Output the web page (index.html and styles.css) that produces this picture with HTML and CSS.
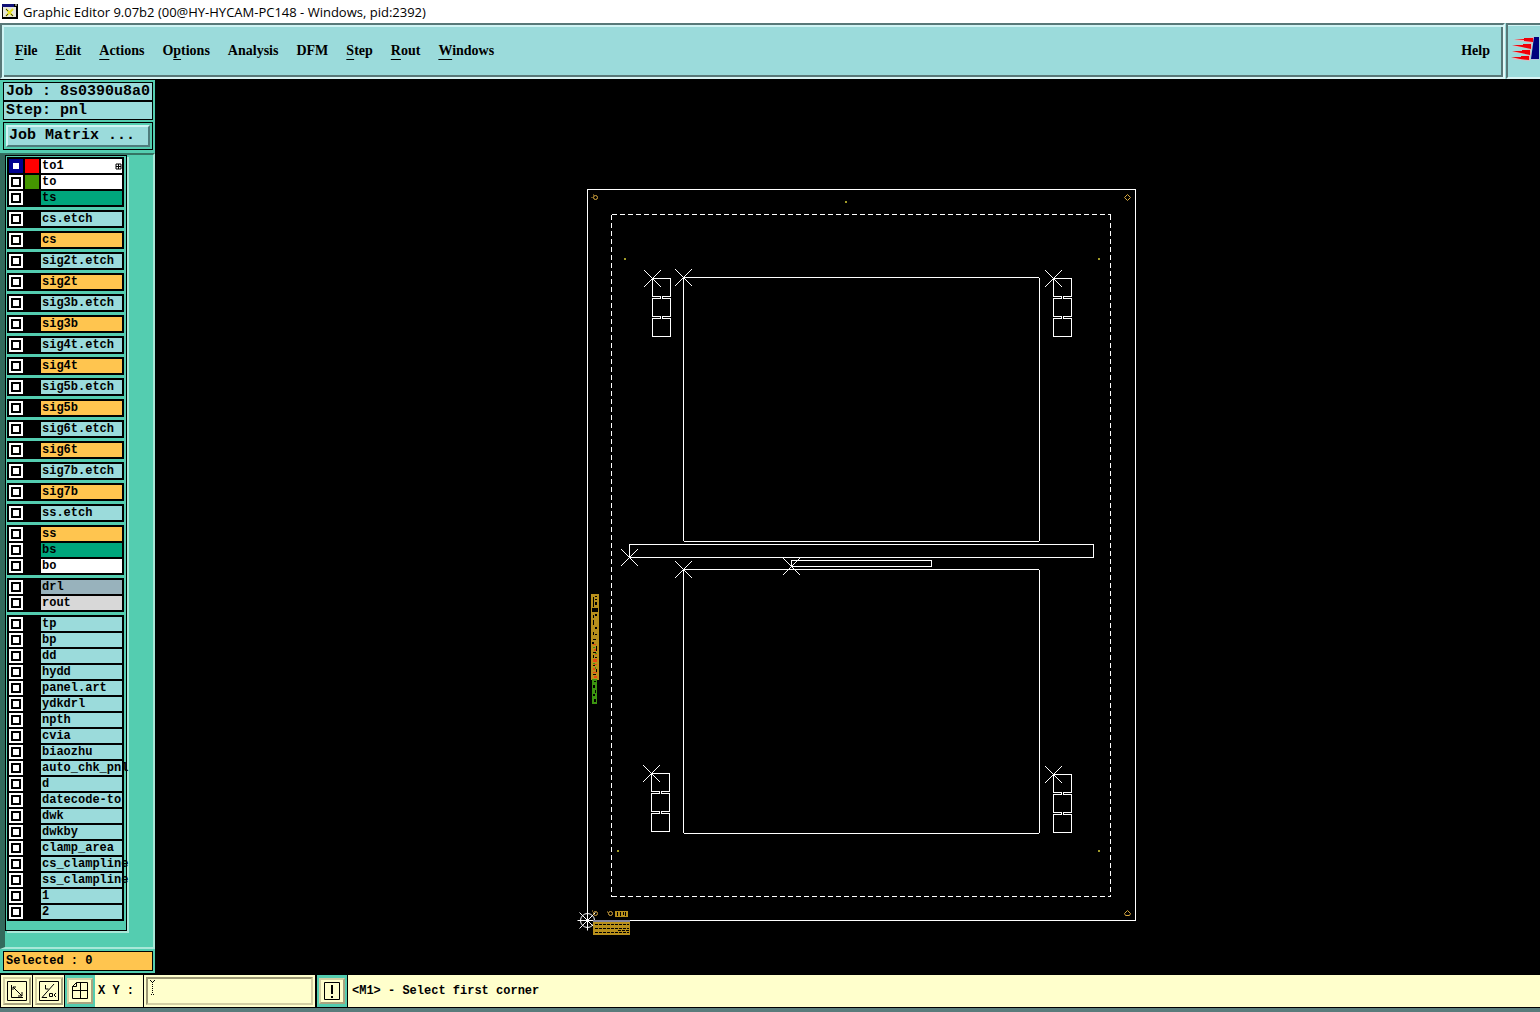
FILE: index.html
```html
<!DOCTYPE html>
<html lang="en">
<head>
<meta charset="utf-8">
<title>Graphic Editor 9.07b2</title>
<link rel="stylesheet" href="styles.css">
</head>
<body>
<header class="titlebar">
  <svg class="app-icon" viewBox="0 0 16 15" aria-hidden="true">
    <rect width="16" height="15" fill="#000"/><rect x="1" y="3" width="13" height="10" fill="#e4e4dc"/>
    <rect width="12" height="3" fill="#101078"/><path d="M13 1h2" stroke="#fff"/>
    <path d="M4 5l7 7M11 5l-7 7" stroke="#e6e020" stroke-width="2"/><path d="M4 5l2 2M9 10l2 2M4 12l2-2" stroke="#333"/>
  </svg>
  <span>Graphic Editor 9.07b2 (00@HY-HYCAM-PC148 - Windows, pid:2392)</span>
</header>

<div class="menurow">
  <nav class="menubar">
    <button class="menu"><u>F</u>ile</button>
    <button class="menu"><u>E</u>dit</button>
    <button class="menu"><u>A</u>ctions</button>
    <button class="menu">O<u>p</u>tions</button>
    <button class="menu">Analysis</button>
    <button class="menu">DFM</button>
    <button class="menu"><u>S</u>tep</button>
    <button class="menu"><u>R</u>out</button>
    <button class="menu"><u>W</u>indows</button>
    <button class="menu help">Help</button>
  </nav>
  <div class="brand">
    <svg class="logo" viewBox="0 0 31 52" aria-hidden="true">
      <g fill="#e8b8bc"><path d="M5 15l21-3v6zM4 21l20-3v6zM4 27l19-3v6zM3 34l19-4v6z"/></g>
      <g fill="#f00008"><path d="M6 14h10v-1h9v4l-9-1v-1zM4 20h11v-1h8v5l-9-2zM4 26h10v-1h8v5l-9-2zM3 32h10v-1h8v4l-9-1z"/></g>
      <path d="M27 12h4v23h-9z" fill="#b8c4d8"/><path d="M26 12h5v22h-8z" fill="#00007c"/>
    </svg>
  </div>
</div>

<main class="workspace">
  <aside class="sidebar">
    <div class="job">
      <div class="info">Job : 8s0390u8a0</div>
      <div class="info">Step: pnl</div>
    </div>
    <div class="matrix"><button class="matrix-btn">Job Matrix ...</button></div>
    <div class="scroll">
      <div class="layers">
        <div class="group">
          <label class="layer board"><input type="checkbox" checked><i class="swatch red"></i><span>to1</span><svg class="mark" viewBox="0 0 5 5" aria-hidden="true"><path d="M0 0h5v5H0zM2.500 0v5M0 2.500h5" fill="none" stroke="#000"/></svg></label>
          <label class="layer board"><input type="checkbox"><i class="swatch green"></i><span>to</span></label>
          <label class="layer mask"><input type="checkbox"><i class="swatch"></i><span>ts</span></label>
        </div>
        <div class="group"><label class="layer"><input type="checkbox"><i class="swatch"></i><span>cs.etch</span></label></div>
        <div class="group"><label class="layer signal"><input type="checkbox"><i class="swatch"></i><span>cs</span></label></div>
        <div class="group"><label class="layer"><input type="checkbox"><i class="swatch"></i><span>sig2t.etch</span></label></div>
        <div class="group"><label class="layer signal"><input type="checkbox"><i class="swatch"></i><span>sig2t</span></label></div>
        <div class="group"><label class="layer"><input type="checkbox"><i class="swatch"></i><span>sig3b.etch</span></label></div>
        <div class="group"><label class="layer signal"><input type="checkbox"><i class="swatch"></i><span>sig3b</span></label></div>
        <div class="group"><label class="layer"><input type="checkbox"><i class="swatch"></i><span>sig4t.etch</span></label></div>
        <div class="group"><label class="layer signal"><input type="checkbox"><i class="swatch"></i><span>sig4t</span></label></div>
        <div class="group"><label class="layer"><input type="checkbox"><i class="swatch"></i><span>sig5b.etch</span></label></div>
        <div class="group"><label class="layer signal"><input type="checkbox"><i class="swatch"></i><span>sig5b</span></label></div>
        <div class="group"><label class="layer"><input type="checkbox"><i class="swatch"></i><span>sig6t.etch</span></label></div>
        <div class="group"><label class="layer signal"><input type="checkbox"><i class="swatch"></i><span>sig6t</span></label></div>
        <div class="group"><label class="layer"><input type="checkbox"><i class="swatch"></i><span>sig7b.etch</span></label></div>
        <div class="group"><label class="layer signal"><input type="checkbox"><i class="swatch"></i><span>sig7b</span></label></div>
        <div class="group"><label class="layer"><input type="checkbox"><i class="swatch"></i><span>ss.etch</span></label></div>
        <div class="group">
          <label class="layer signal"><input type="checkbox"><i class="swatch"></i><span>ss</span></label>
          <label class="layer mask"><input type="checkbox"><i class="swatch"></i><span>bs</span></label>
          <label class="layer board"><input type="checkbox"><i class="swatch"></i><span>bo</span></label>
        </div>
        <div class="group">
          <label class="layer drill"><input type="checkbox"><i class="swatch"></i><span>drl</span></label>
          <label class="layer rout"><input type="checkbox"><i class="swatch"></i><span>rout</span></label>
        </div>
        <div class="group">
          <label class="layer"><input type="checkbox"><i class="swatch"></i><span>tp</span></label>
          <label class="layer"><input type="checkbox"><i class="swatch"></i><span>bp</span></label>
          <label class="layer"><input type="checkbox"><i class="swatch"></i><span>dd</span></label>
          <label class="layer"><input type="checkbox"><i class="swatch"></i><span>hydd</span></label>
          <label class="layer"><input type="checkbox"><i class="swatch"></i><span>panel.art</span></label>
          <label class="layer"><input type="checkbox"><i class="swatch"></i><span>ydkdrl</span></label>
          <label class="layer"><input type="checkbox"><i class="swatch"></i><span>npth</span></label>
          <label class="layer"><input type="checkbox"><i class="swatch"></i><span>cvia</span></label>
          <label class="layer"><input type="checkbox"><i class="swatch"></i><span>biaozhu</span></label>
          <label class="layer"><input type="checkbox"><i class="swatch"></i><span>auto_chk_pnl</span></label>
          <label class="layer"><input type="checkbox"><i class="swatch"></i><span>d</span></label>
          <label class="layer"><input type="checkbox"><i class="swatch"></i><span>datecode-to</span></label>
          <label class="layer"><input type="checkbox"><i class="swatch"></i><span>dwk</span></label>
          <label class="layer"><input type="checkbox"><i class="swatch"></i><span>dwkby</span></label>
          <label class="layer"><input type="checkbox"><i class="swatch"></i><span>clamp_area</span></label>
          <label class="layer"><input type="checkbox"><i class="swatch"></i><span>cs_clampline</span></label>
          <label class="layer"><input type="checkbox"><i class="swatch"></i><span>ss_clampline</span></label>
          <label class="layer"><input type="checkbox"><i class="swatch"></i><span>1</span></label>
          <label class="layer"><input type="checkbox"><i class="swatch"></i><span>2</span></label>
        </div>
      </div>
    </div>
    <div class="selected">Selected : 0</div>
  </aside>

  <div class="canvas">
    <svg class="board-view" viewBox="155 80 1385 895" role="img" aria-label="Panel layout">
      <defs>
        <g id="cross"><path d="M-8.500-8.500L8.500 8.500M8.500-8.500L-8.500 8.500"/></g>
        <g id="coupon"><path d="M0 0h18v18H10v2h8v18H10v2h8v18H0V40h8v-2H0V20h8v-2H0zM0 18h8M10 18h8M0 20h8M10 20h8M0 38h8M10 38h8M0 40h8M10 40h8"/></g>
      </defs>
      <g transform="translate(.5 .5)" fill="none" stroke="#fff">
        <g shape-rendering="crispEdges">
          <rect x="587" y="189" width="548" height="731"/>
          <path d="M611 214H1110M611 896H1110M611 214V896M1110 214V896" stroke-dasharray="5 3"/>
          <rect x="683" y="277" width="356" height="264" rx="2"/>
          <rect x="683" y="569" width="356" height="264" rx="2"/>
          <rect x="629" y="544" width="464" height="13"/>
          <rect x="791" y="560" width="140" height="6"/>
          <use href="#coupon" x="652" y="278"/><use href="#coupon" x="1053" y="278"/>
          <use href="#coupon" x="651" y="773"/><use href="#coupon" x="1053" y="774"/>
        </g>
        <use href="#cross" x="652" y="278"/><use href="#cross" x="683" y="277"/><use href="#cross" x="1053" y="278"/>
        <use href="#cross" x="629" y="557"/><use href="#cross" x="683" y="569"/><use href="#cross" x="791" y="566"/>
        <use href="#cross" x="651" y="773"/><use href="#cross" x="1053" y="774"/>
        <circle cx="587" cy="920" r="7"/><path d="M577 920h20M587 910v20M579 912l16 16M595 912l-16 16"/>
        <g stroke="#d8a840">
          <circle cx="595" cy="197" r="2"/><path d="M591 197h1M593 194v1"/>
          <path d="M1124 197l3-3 3 3-3 3zM1124 913l3-3 3 3-1 2h-4z"/>
          <circle cx="595" cy="913" r="2"/><circle cx="610" cy="913" r="2"/><path d="M592 910v1M607 911v1"/>
        </g>
      </g>
      <g fill="#a09a28"><path d="M845 201h2v2h-2zM624 258h2v2h-2zM1098 258h2v2h-2zM617 850h2v2h-2zM1098 850h2v2h-2z"/></g>
      <g shape-rendering="crispEdges">
        <path d="M591 594h8v86h-8z" fill="#b8901c"/><path d="M592 679h5v25h-5z" fill="#3c9410"/>
        <path d="M593 644h3v1h-3zM594 649h2v2h-2zM595 654h2v1h-2zM593 659h4v3h-4zM594 664h3v1h-3zM593 668h2v2h-2zM593 672h4v1h-4zM594 676h3v2h-3z" fill="#e84810"/>
        <path d="M593 597h1v10h-1zM595 596h2v1h-2zM595 599h2v1h-2zM595 602h2v3h-2zM592 608h6v4h-6zM593 615h1v3h-1zM595 614h2v2h-2zM593 620h1v5h-1zM595 627h2v2h-2zM593 632h1v3h-1zM595 634h2v1h-2zM593 639h3v1h-3zM592 642h2v2h-2zM596 646h1v5h-1zM593 652h3v1h-3zM593 655h1v3h-1zM595 657h2v1h-2zM593 665h2v1h-2zM596 669h1v3h-1zM593 674h3v1h-3zM594 681h2v1h-2zM593 685h2v3h-2zM595 690h1v3h-1zM593 694h2v2h-2zM594 699h2v3h-2z"/>
        <path d="M593 647h2v1h-2zM595 653h2v1h-2zM593 663h2v1h-2zM595 667h1v2h-1z" fill="#3c9410"/>
        <path d="M615 911h13v6h-13zM593 921h37v14h-37z" fill="#b8901c"/><path d="M593 920h37v2h-37z" fill="#86869a"/>
        <path d="M617 912h1v4h-1zM620 912h1v4h-1zM623 912h1v3h-1zM625 912h1v4h-1z"/>
        <path d="M595 924.500H629M595 928.500H629M595 932.500H629" fill="none" stroke="#000" stroke-dasharray="3 1"/>
        <path d="M618 930.500h11" stroke="#000" stroke-dasharray="3 1"/>
      </g>
    </svg>
  </div>
</main>

<footer class="statusbar">
  <button class="tool" aria-label="Snap distance"><svg viewBox="0 0 22 22"><path d="M1.500 1.500h19v19h-19zM5.500 5v12.500H17M7 7l9 9M7 10V7h3M16 12v4h-4"/></svg></button>
  <button class="tool" aria-label="Angle"><svg viewBox="0 0 22 22"><path d="M1.500 1.500h19v19h-19zM16 4L4 17.500h5M7.500 5v4h3M11.500 13.500h3v3h-3zM18 13l-2 2 2 2"/></svg></button>
  <button class="tool active" aria-label="Grid"><svg viewBox="0 0 22 22"><path d="M7.500 2.500h11v16h-15v-12zM11.500 3v15M3 10.500h16M7.500 2.500v4h-4"/></svg></button>
  <label class="xy" for="xy">X Y :</label>
  <div class="field"><input id="xy" type="text"><svg class="caret" viewBox="0 0 5 16" aria-hidden="true"><path d="M0 .5h1M4 .5h1M1 1.500h1M3 1.500h1M1 14.500h1M3 14.500h1" stroke="#000"/><path d="M2.500 2v12" stroke="#000" stroke-dasharray="1 1"/></svg></div>
  <button class="tool active alert" aria-label="Interrupt"><svg viewBox="0 0 22 22"><path d="M3.500 2.500h15v17h-15z"/><path d="M11 5v9M11 16v2" stroke-width="2"/></svg></button>
  <output class="message">&lt;M1&gt; - Select first corner</output>
</footer>
</body>
</html>
```
FILE: styles.css
```css
* { box-sizing: border-box; }
body {
  margin: 0;
  min-height: 100vh;
  display: flex;
  flex-direction: column;
  background: #000;
  color: #000;
  font: bold 12px "Liberation Mono", "Courier New", monospace;
  overflow: hidden;
}
button { margin: 0; padding: 0; color: inherit; font: inherit; border-radius: 0; }

.titlebar {
  display: flex;
  align-items: center;
  gap: 5px;
  height: 23px;
  padding-left: 2px;
  background: #fff;
  font: 13px "Open Sans", sans-serif;
}
.app-icon { width: 16px; height: 15px; }

.menurow { display: flex; height: 56px; background: #9bdbdb; }
.menubar, .brand {
  display: flex;
  border: 2px solid;
  border-color: #587878 #e0f8f8 #d8f4f4 #587878;
}
.menubar {
  flex: 1;
  align-items: center;
  gap: 18px;
  padding: 0 13px;
  box-shadow: inset 2px 2px #d0f4f4, inset -2px -2px #587878;
  font: bold 14px "Liberation Serif", "Times New Roman", serif;
}
.menu { border: 0; background: none; line-height: 20px; }
.menu u { text-decoration-thickness: 1px; text-underline-offset: 4px; text-decoration-skip-ink: none; }
.help { margin-left: auto; }
.brand { width: 34px; margin-left: 1px; border-right: 0; box-shadow: inset 0 1px #d0f4f4; }
.logo { width: 31px; height: 52px; }

.workspace { flex: 1; display: flex; border-top: 1px solid #000; }
.sidebar {
  display: flex;
  flex-direction: column;
  width: 155px;
  margin-bottom: 2px;
  background: #54cdb0;
}
.job { padding: 2px 2px 0 3px; }
.info {
  height: 19px;
  border: 1px solid #000;
  background: #9bdbdb;
  padding-left: 2px;
  font-size: 15px;
  line-height: 17px;
  white-space: nowrap;
}
.matrix { margin: 2px 2px 3px 3px; border: 1px solid #000; padding: 2px; }
.matrix-btn {
  display: block;
  width: 100%;
  height: 22px;
  border: 2px solid;
  border-color: #d0f4f4 #4e7c7c #4e7c7c #d0f4f4;
  background: #9bdbdb;
  padding-left: 1px;
  font-size: 15px;
  line-height: 18px;
  text-align: left;
}
.scroll {
  flex: 1;
  border: 2px solid #a8e8d8;
  border-top: 2px solid #347464;
  border-left: 5px solid #336a5c;
}
.layers {
  display: grid;
  gap: 3px;
  width: 122px;
  border: 1px solid #000;
  padding: 1px 2px 9px 1px;
  box-shadow: 2px 2px #a8e8d8;
}
.group { border: solid #000; border-width: 0 2px; padding: 1px 0; background: #000; }
.layer {
  display: grid;
  grid-template-columns: 14px 14px 1fr;
  gap: 2px;
  height: 16px;
  padding: 1px 0;
  position: relative;
}
.layer input {
  appearance: none;
  width: 14px;
  height: 14px;
  margin: 0;
  border: 2px solid #fff;
  background: #fff;
  box-shadow: inset 0 0 0 2px #000;
}
.layer input:checked { border-color: #000090; box-shadow: inset 0 0 0 2px #000090; }
.swatch.red { background: #f00; }
.swatch.green { background: #449600; }
.layer span {
  padding-left: 1px;
  background: #9bdbdb;
  line-height: 14px;
  white-space: nowrap;
  min-width: 0;
}
.board span { background: #fff; }
.mask span { background: #00a67c; }
.signal span { background: #ffc54f; }
.drill span { background: #98b2bc; }
.rout span { background: #d8d8d8; }
.mark { position: absolute; right: 1px; top: 6px; width: 5px; height: 5px; overflow: visible; }
.selected {
  margin: 2px 2px 2px 3px;
  height: 20px;
  border: 1px solid #000;
  padding-left: 2px;
  background: #ffc54f;
  line-height: 18px;
}

.canvas { flex: 1; min-width: 0; display: flex; }
.board-view { width: 100%; height: 100%; }

.statusbar {
  display: flex;
  height: 37px;
  padding-left: 1px;
  border-bottom: 4px solid #5a7c7c;
  background: #ffffcc;
  box-shadow: inset 0 -1px #000, inset 1px 0 #000;
}
.statusbar > * { margin-bottom: 1px; }
.tool {
  width: 32px;
  padding: 2px;
  border: 0;
  border-right: 1px solid #000;
  background: #ffffcc;
}
.tool svg {
  display: block;
  width: 28px;
  height: 28px;
  border: 2px solid;
  border-color: #d4d0a4 #a8a480 #a8a480 #d4d0a4;
  padding: 1px;
  background: #ffffcc;
  fill: none;
  stroke: #000;
}
.tool.active { width: 30px; background: #54cdb0; border-color: #54cdb0; padding: 3px 2px; }
.tool.active svg { width: 26px; height: 26px; padding: 0; }
.xy { width: 49px; padding-left: 3px; border-right: 1px solid #000; line-height: 32px; white-space: nowrap; }
.field { position: relative; width: 173px; padding: 2px; border-right: 2px solid #000; }
.field input {
  display: block;
  width: 100%;
  height: 28px;
  border: 2px solid;
  border-color: #9c9874 #d4d0a4 #d4d0a4 #9c9874;
  background: #ffffcc;
  font: inherit;
}
.caret { position: absolute; left: 6px; top: 5px; width: 5px; height: 16px; }
.alert { border-right-color: #000; }
.message { flex: 1; padding-left: 4px; line-height: 32px; border-left: 1px solid #000; }
```
